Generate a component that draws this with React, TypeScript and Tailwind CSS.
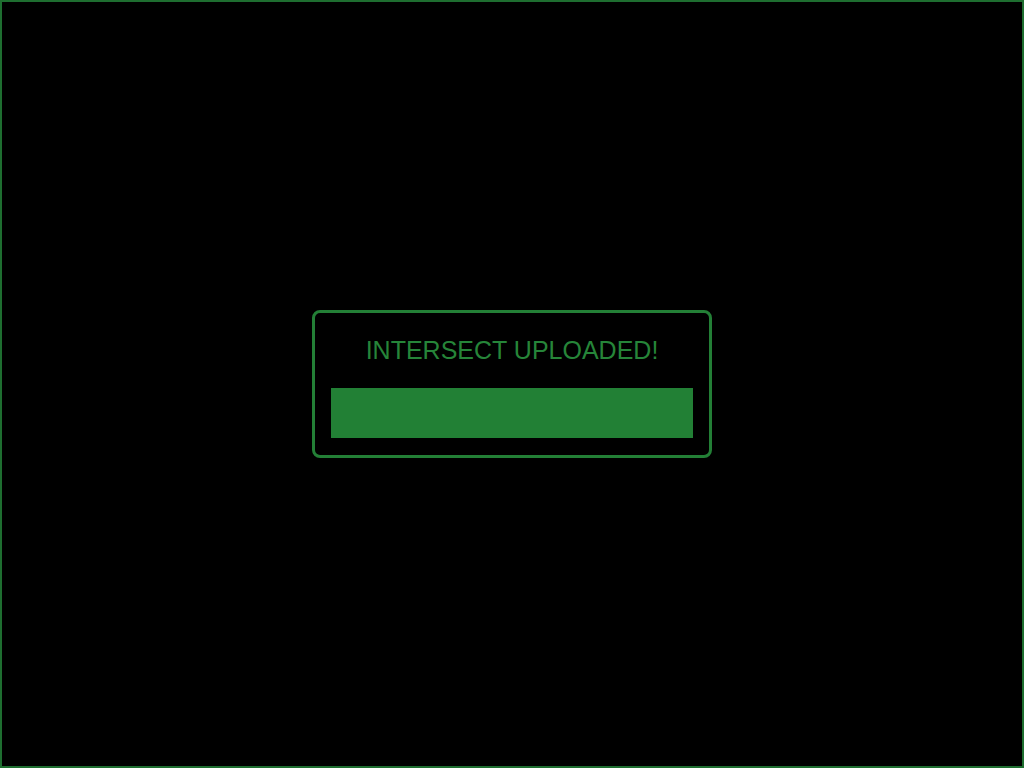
import React from "react";

export default function App() {
  return (
    <div className="w-[1024px] h-[768px] bg-black border-2 border-[#1e6e30] flex items-center justify-center" style={{ fontFamily: '"Liberation Sans", Arial, sans-serif' }}>
      <div className="w-[400px] h-[148px] border-[3px] border-[#237f36] rounded-[8px] px-[16px] pt-[22px] pb-[17px] flex flex-col">
        <div className="text-[25px] leading-[30px] text-center text-[#268539]">INTERSECT UPLOADED!</div>
        <div className="mt-auto h-[50px] bg-[#228035]"></div>
      </div>
    </div>
  );
}
